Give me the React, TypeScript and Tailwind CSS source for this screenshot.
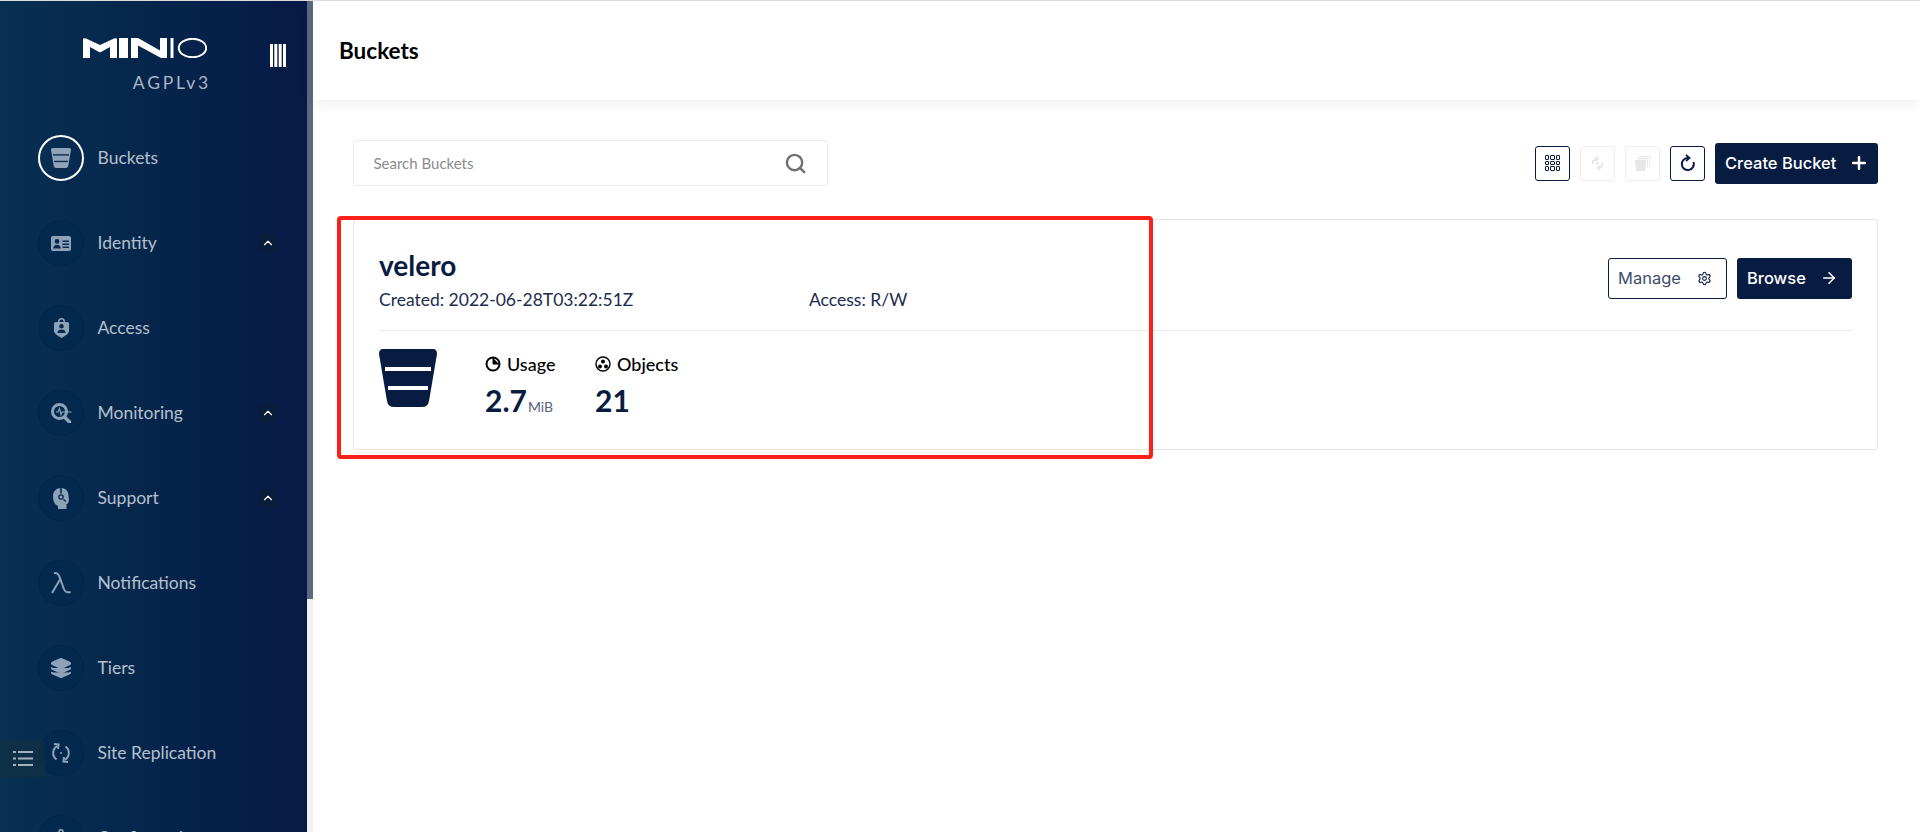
import { ChevronUp, Layers, Plus, Search, Settings, ArrowRight } from 'lucide-react'
import type { ReactNode } from 'react'

const lato = "font-['Lato','Noto_Sans',sans-serif]"
const inter = "font-['Inter','Liberation_Sans',sans-serif]"

function BucketGlyph({ className, line = '#fff' }: { className?: string; line?: string }) {
  return (
    <svg viewBox="0 0 58 58" className={className}>
      <path d="M4 0H54Q58 0 58 5L50 52Q49 58 43 58H15Q9 58 8 52L0 5Q0 0 4 0Z" fill="currentColor" />
      <rect x="6" y="18" width="46" height="4" fill={line} />
      <rect x="9" y="37" width="40" height="4" fill={line} />
    </svg>
  )
}

function IdentityIcon() {
  return (
    <svg viewBox="0 0 20 15" className="h-[15px] w-[20px]" fill="currentColor">
      <path fillRule="evenodd" d="M2 0H18Q20 0 20 2V13Q20 15 18 15H2Q0 15 0 13V2Q0 0 2 0ZM6 3A2.4 2.4 0 1 0 6 7.8A2.4 2.4 0 1 0 6 3ZM2.2 12.5H9.8C9.8 10 8.2 8.7 6 8.7S2.2 10 2.2 12.5ZM11.5 4.5V6H18V4.5ZM11.5 7.5V9H18V7.5ZM11.5 10.5V12H18V10.5Z" />
    </svg>
  )
}

function AccessIcon() {
  return (
    <svg viewBox="0 0 15 20" className="h-[20px] w-[15px]" fill="currentColor">
      <path fillRule="evenodd" d="M4 4V3.5A3.5 3.5 0 0 1 11 3.5V4H13.5Q15 4 15 5.5V13Q15 16 7.5 20Q0 16 0 13V5.5Q0 4 1.500 4ZM5.500 4H9.500V3.500A2 2 0 0 0 5.500 3.500ZM7.500 6A2.300 2.300 0 1 0 7.500 10.600A2.300 2.300 0 1 0 7.500 6ZM3.500 15H11.500C11.500 12.500 10 11.400 7.500 11.400S3.500 12.500 3.500 15Z" />
    </svg>
  )
}

function MonitoringIcon() {
  return (
    <svg viewBox="0 0 21 20" className="h-[20px] w-[21px]" fill="none" stroke="currentColor">
      <circle cx="8.500" cy="8.500" r="7" strokeWidth="3" />
      <path d="M13.500 14L18.500 19" strokeWidth="3.500" strokeLinecap="round" />
      <path d="M5 9H7L8.500 5.500L10 11.500L11 9H20.500" strokeWidth="1.200" />
    </svg>
  )
}

function SupportIcon() {
  return (
    <svg viewBox="0 0 16 21" className="h-[21px] w-[16px]" fill="currentColor">
      <path fillRule="evenodd" d="M8 0C12.500 0 15.500 3 15.500 7.500L16 12Q15.500 16 13.500 16V21H5V18Q0 16 0 8.500C0 3 3.500 0 8 0ZM8 6.200A2.800 2.800 0 1 0 8 11.800A2.800 2.800 0 1 0 8 6.200ZM8 7.500A1.500 1.500 0 1 1 8 10.500A1.500 1.500 0 1 1 8 7.500ZM7.200 0V5.500H8.800V0ZM10 12L12.500 14L13.200 13L11 11Z" />
    </svg>
  )
}

function LambdaIcon() {
  return (
    <svg viewBox="0 0 20 22" className="h-[22px] w-[20px]" fill="none" stroke="currentColor" strokeWidth="2">
      <path d="M1 21L9 7.500" />
      <path d="M3 1.200C7 0.500 8 3 9.500 7.500L12.500 16C13.800 20 15.500 21 19.500 20" />
    </svg>
  )
}

function ReplicationIcon() {
  return (
    <svg viewBox="0 0 20 20" className="h-[20px] w-[20px]" fill="none" stroke="currentColor" strokeWidth="2">
      <path d="M6 3.200A8 8 0 0 0 5.500 16.500" />
      <path d="M14 16.800A8 8 0 0 0 14.500 3.500" />
      <path d="M3 1L7.500 1.500L7 6" />
      <path d="M17 19L12.500 18.500L13 14" />
      <circle cx="10" cy="10" r="1" fill="currentColor" stroke="none" />
    </svg>
  )
}

function NavItem({ icon, label, chevron, active }: { icon: ReactNode; label: string; chevron?: boolean; active?: boolean }) {
  return (
    <div className="flex h-[46px] shrink-0 items-center pl-[38px] pr-[30px]">
      <div className={`flex h-[46px] w-[46px] shrink-0 items-center justify-center rounded-full text-[#8fa3b8] ${active ? 'border-2 border-white' : 'border border-[#04244a] bg-[#03294f]'}`}>
        {icon}
      </div>
      <span className={`ml-[13.500px] flex-1 text-[17.500px] text-[#b4c0cd] ${lato}`}>{label}</span>
      {chevron && (
        <div className="flex h-[18px] w-[19px] items-center justify-center rounded-sm bg-[#081c3c]">
          <ChevronUp size={14} strokeWidth={2} className="text-white" />
        </div>
      )}
    </div>
  )
}

function Sidebar() {
  return (
    <aside className="flex w-[307px] shrink-0 flex-col overflow-hidden bg-gradient-to-r from-[#073052] to-[#061a45]">
      <div className="relative h-[100px] shrink-0">
        {/* logo */}
        <svg viewBox="0 0 124 20" className="absolute left-[83px] top-[37px] h-[20px] w-[124px]" fill="#fff">
          <path d="M0 20V1Q0 0 3 0.500L17 7L31 0.500Q34 0 34 1V20H27V9L18 14Q17 14.500 16 14L7 9V20Z" />
          <rect x="36" y="0" width="9" height="20" />
          <path d="M48 20V0H55L77 12.500V0H84V20H78L55 7.500V20Z" />
          <rect x="87.500" y="0" width="3" height="20" />
          <ellipse cx="109.500" cy="10" rx="13.700" ry="9.200" fill="none" stroke="#fff" strokeWidth="2" />
        </svg>
        <div className={`absolute right-[96px] top-[72px] text-[17.500px] leading-[20px] tracking-[0.16em] text-[#a9b8c9] ${lato}`}>AGPLv3</div>
        <svg viewBox="0 0 16 23" className="absolute left-[270px] top-[43px] h-[23px] w-[16px]" fill="#fff">
          <rect x="0" width="3" height="23" />
          <rect x="4.300" width="3" height="23" />
          <rect x="8.700" width="3" height="23" />
          <rect x="13" width="3" height="23" />
        </svg>
      </div>
      <nav className="flex flex-col gap-[39px] pt-[34px]">
        <NavItem active label="Buckets" icon={<BucketGlyph className="h-[20px] w-[20px]" line="#06294d" />} />
        <NavItem chevron label="Identity" icon={<IdentityIcon />} />
        <NavItem label="Access" icon={<AccessIcon />} />
        <NavItem chevron label="Monitoring" icon={<MonitoringIcon />} />
        <NavItem chevron label="Support" icon={<SupportIcon />} />
        <NavItem label="Notifications" icon={<LambdaIcon />} />
        <NavItem label="Tiers" icon={<Layers size={22} fill="currentColor" />} />
        <NavItem label="Site Replication" icon={<ReplicationIcon />} />
        <NavItem label="Configuration" icon={<Settings size={20} />} />
      </nav>
    </aside>
  )
}

function ToolButton({ children, off }: { children: ReactNode; off?: boolean }) {
  return (
    <button className={`flex h-[35px] w-[35px] items-center justify-center rounded-[3px] border ${off ? 'border-[#ededed] text-[#e6e6e6]' : 'border-[#081c42] text-[#081c42]'}`}>
      {children}
    </button>
  )
}

function GridIcon() {
  const cells = [0, 1, 2, 3, 4, 5, 6, 7, 8]
  return (
    <div className="grid grid-cols-3 gap-[1px]">
      {cells.map((c) => (
        <span key={c} className="h-[4.500px] w-[4.500px] rounded-[1px] border border-current" />
      ))}
    </div>
  )
}

function Toolbar() {
  return (
    <div className="flex items-center justify-between">
      <div className="flex h-[46px] w-[475px] items-center justify-between rounded-[3px] border border-[#eaeaea] bg-white pl-[19.500px] pr-[20px]">
        <span className={`text-[15px] text-[#8b8b8b] ${lato}`}>Search Buckets</span>
        <Search size={23} strokeWidth={2.500} className="text-[#707070]" />
      </div>
      <div className="flex items-center gap-[10px]">
        <ToolButton><GridIcon /></ToolButton>
        <ToolButton off>
          <svg viewBox="0 0 16 16" className="h-[15px] w-[15px]" fill="none" stroke="currentColor" strokeWidth="2">
            <circle cx="8" cy="8" r="1.500" fill="currentColor" stroke="none" />
            <path d="M3 9C2.500 6 4 3.500 7 3" />
            <path d="M5.500 0.500L8.500 3L5.500 5.500" strokeWidth="1.500" />
            <path d="M13 7C13.500 10 12 12.500 9 13" />
            <path d="M10.500 10.500L7.500 13L10.500 15.500" strokeWidth="1.500" />
          </svg>
        </ToolButton>
        <ToolButton off>
          <svg viewBox="0 0 18 18" className="h-[17px] w-[17px]" fill="currentColor">
            <path d="M1 5H13L11.800 17H2.200Z" />
            <path d="M4 3H15L14.500 13.500H13.800L14 4.200H4Z" />
            <path d="M6.500 1H17.500L16.800 11H16L16.500 2H6.500Z" />
          </svg>
        </ToolButton>
        <ToolButton>
          <svg viewBox="0 0 16 18" className="h-[18px] w-[16px]" fill="none" stroke="currentColor" strokeWidth="2">
            <path d="M8 4A6 6 0 1 0 13.500 8" />
            <path d="M6 0.800L9.500 4L6 7.200" strokeWidth="1.800" />
          </svg>
        </ToolButton>
        <button className={`flex h-[41px] w-[163px] items-center justify-between rounded-[3px] bg-[#081c42] pl-[10px] pr-[9px] text-[16.500px] font-medium text-white ${inter}`}>
          Create Bucket
          <Plus size={20} strokeWidth={3} />
        </button>
      </div>
    </div>
  )
}

function Stat({ icon, label, value, unit }: { icon: ReactNode; label: string; value: string; unit?: string }) {
  return (
    <div className={lato}>
      <div className="flex h-[24px] items-center gap-[6px] text-[18px] font-medium text-black">
        {icon}
        {label}
      </div>
      <div className="mt-[5px] flex items-baseline text-[#081c42]">
        <span className="text-[30px] font-bold leading-[38px]">{value}</span>
        {unit && <span className="ml-[1px] text-[14px] text-[#55627a]">{unit}</span>}
      </div>
    </div>
  )
}

function BucketCard() {
  return (
    <div className={`mt-[33px] h-[231px] rounded-[3px] border border-[#e5e5e5] bg-white pl-[25px] pr-[25px] ${lato}`}>
      <div className="flex h-[111px] items-start justify-between border-b border-[#eaeaea]">
        <div className="pt-[29px]">
          <h2 className="text-[28px] font-bold leading-[32px] text-[#081c42]">velero</h2>
          <div className="flex text-[17.500px] leading-[20px] text-[#1c2b4d]">
            <span className="w-[430px] pt-[9px]">Created: 2022-06-28T03:22:51Z</span>
            <span className="pt-[9px]">Access: R/W</span>
          </div>
        </div>
        <div className={`flex gap-[10px] pt-[38px] text-[16.500px] font-medium ${inter}`}>
          <button className="flex h-[41px] w-[119px] items-center justify-between rounded-[3px] border border-[#081c42] bg-white pb-[1px] pl-[9px] pr-[14px] font-normal text-[#3f4d6b]">
            Manage
            <Settings size={15} strokeWidth={1.75} className="text-[#081c42]" />
          </button>
          <button className="flex h-[41px] w-[115px] items-center justify-between rounded-[3px] bg-[#081c42] pb-[1px] pl-[10px] pr-[14px] text-white">
            Browse
            <ArrowRight size={18} strokeWidth={2} />
          </button>
        </div>
      </div>
      <div className="flex pt-[18px]">
        <BucketGlyph className="h-[58px] w-[58px] text-[#081c42]" />
        <div className="ml-[48px] flex pt-[3px]">
          <div className="w-[110px]">
            <Stat
              label="Usage"
              value="2.7"
              unit="MiB"
              icon={
                <svg viewBox="0 0 16 16" className="h-[16px] w-[16px]" fill="none" stroke="#000" strokeWidth="2">
                  <circle cx="8" cy="8" r="6.500" />
                  <path d="M8 2V8H14" fill="#000" strokeWidth="1" />
                </svg>
              }
            />
          </div>
          <Stat
            label="Objects"
            value="21"
            icon={
              <svg viewBox="0 0 16 16" className="h-[16px] w-[16px]" fill="#000">
                <circle cx="8" cy="8" r="7" fill="none" stroke="#000" strokeWidth="1.400" />
                <circle cx="8" cy="5.500" r="2" />
                <circle cx="5" cy="10.500" r="2" />
                <circle cx="11" cy="10.500" r="2" />
              </svg>
            }
          />
        </div>
      </div>
    </div>
  )
}

export default function App() {
  return (
    <div className="relative flex h-[832px] w-[1920px] overflow-hidden border-t border-[#dcdcdc] bg-white">
      <Sidebar />

      {/* scrollbar */}
      <div className="w-[6px] shrink-0 bg-[#f1f1f1]">
        <div className="h-[598px] bg-[#5c6880]" />
      </div>

      <main className="flex min-w-0 flex-1 flex-col">
        <header className={`flex h-[99px] shrink-0 items-center bg-white pl-[26px] text-[22.500px] font-bold text-black shadow-[0_3px_12px_rgba(0,0,0,0.07)] ${lato}`}>
          Buckets
        </header>
        <div className="pl-[40px] pr-[42px] pt-[40px]">
          <Toolbar />
          <BucketCard />
        </div>
      </main>

      {/* red annotation */}
      <div className="absolute left-[337px] top-[215px] h-[243px] w-[816px] rounded-[4px] border-[4px] border-[#fb2018]" />

      {/* floating outline button */}
      <div className="absolute left-0 top-[739px] flex h-[37px] w-[45px] items-center justify-center rounded-r-[4px] bg-[#14303f]/60">
        <svg viewBox="0 0 20 15" className="h-[15px] w-[20px]" stroke="#a5b2bf" strokeWidth="1.800">
          <path d="M5 1H20M5 7.500H20M5 14H20" />
          <path d="M0 1H3M0 7.500H3M0 14H3" />
        </svg>
      </div>
    </div>
  )
}
